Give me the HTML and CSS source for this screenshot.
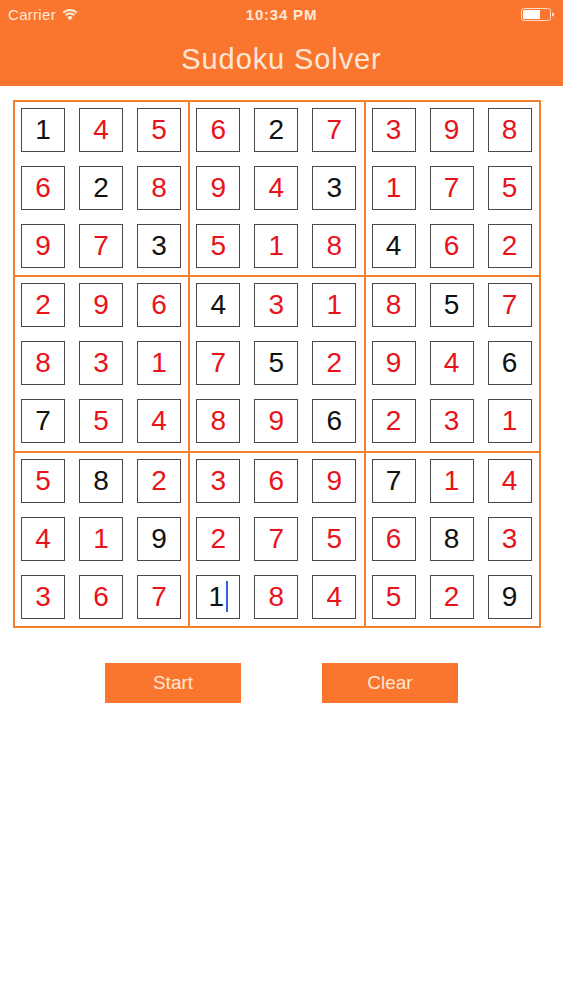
FILE: index.html
```html
<!DOCTYPE html>
<html>
<head>
<meta charset="utf-8">
<link rel="stylesheet" href="styles.css">
</head>
<body>
<header class="top">
  <div class="status">
    <div class="carrier">Carrier
      <svg class="wifi" width="16" height="13" viewBox="0 0 16 13"><path d="M8 12.2 L5.4 9.4 A3.7 3.7 0 0 1 10.6 9.4 Z" fill="#fde9da"/><path d="M3.6 7.3 A6.3 6.3 0 0 1 12.4 7.3" stroke="#fde9da" stroke-width="1.9" fill="none"/><path d="M1.2 4.8 A9.6 9.6 0 0 1 14.8 4.8" stroke="#fde9da" stroke-width="1.9" fill="none"/></svg>
    </div>
    <div class="time">10:34 PM</div>
    <svg class="battery" width="34" height="13" viewBox="0 0 34 13"><rect x="0.5" y="0.5" width="29" height="12" rx="2" fill="none" stroke="#fbd9c2" stroke-width="1"/><rect x="2" y="2" width="17" height="9" rx="1" fill="#fff"/><rect x="31" y="4.5" width="2" height="4" rx="1" fill="#fbd9c2"/></svg>
  </div>
  <h1 class="title">Sudoku Solver</h1>
</header>

<main class="board">
  <div class="block">
    <div class="cell">1</div><div class="cell r">4</div><div class="cell r">5</div>
    <div class="cell r">6</div><div class="cell">2</div><div class="cell r">8</div>
    <div class="cell r">9</div><div class="cell r">7</div><div class="cell">3</div>
  </div>
  <div class="block">
    <div class="cell r">6</div><div class="cell">2</div><div class="cell r">7</div>
    <div class="cell r">9</div><div class="cell r">4</div><div class="cell">3</div>
    <div class="cell r">5</div><div class="cell r">1</div><div class="cell r">8</div>
  </div>
  <div class="block">
    <div class="cell r">3</div><div class="cell r">9</div><div class="cell r">8</div>
    <div class="cell r">1</div><div class="cell r">7</div><div class="cell r">5</div>
    <div class="cell">4</div><div class="cell r">6</div><div class="cell r">2</div>
  </div>
  <div class="block">
    <div class="cell r">2</div><div class="cell r">9</div><div class="cell r">6</div>
    <div class="cell r">8</div><div class="cell r">3</div><div class="cell r">1</div>
    <div class="cell">7</div><div class="cell r">5</div><div class="cell r">4</div>
  </div>
  <div class="block">
    <div class="cell">4</div><div class="cell r">3</div><div class="cell r">1</div>
    <div class="cell r">7</div><div class="cell">5</div><div class="cell r">2</div>
    <div class="cell r">8</div><div class="cell r">9</div><div class="cell">6</div>
  </div>
  <div class="block">
    <div class="cell r">8</div><div class="cell">5</div><div class="cell r">7</div>
    <div class="cell r">9</div><div class="cell r">4</div><div class="cell">6</div>
    <div class="cell r">2</div><div class="cell r">3</div><div class="cell r">1</div>
  </div>
  <div class="block">
    <div class="cell r">5</div><div class="cell">8</div><div class="cell r">2</div>
    <div class="cell r">4</div><div class="cell r">1</div><div class="cell">9</div>
    <div class="cell r">3</div><div class="cell r">6</div><div class="cell r">7</div>
  </div>
  <div class="block">
    <div class="cell r">3</div><div class="cell r">6</div><div class="cell r">9</div>
    <div class="cell r">2</div><div class="cell r">7</div><div class="cell r">5</div>
    <div class="cell">1<span class="caret"></span></div><div class="cell r">8</div><div class="cell r">4</div>
  </div>
  <div class="block">
    <div class="cell">7</div><div class="cell r">1</div><div class="cell r">4</div>
    <div class="cell r">6</div><div class="cell">8</div><div class="cell r">3</div>
    <div class="cell r">5</div><div class="cell r">2</div><div class="cell">9</div>
  </div>
</main>

<div class="actions">
  <button class="btn">Start</button>
  <button class="btn">Clear</button>
</div>
</body>
</html>
```

FILE: styles.css
```css
html, body {
  margin: 0;
  padding: 0;
  background: #fff;
  font-family: "Liberation Sans", Arial, sans-serif;
}

.top {
  background: #fa762e;
  height: 86px;
  display: flex;
  flex-direction: column;
}

.status {
  height: 28px;
  display: flex;
  align-items: center;
  justify-content: space-between;
  padding: 0 8px 0 8px;
  color: #fde9da;
  font-size: 15px;
  position: relative;
}

.carrier {
  display: flex;
  align-items: center;
  gap: 6px;
  letter-spacing: 0.3px;
}

.time {
  position: absolute;
  left: 0;
  right: 0;
  text-align: center;
  font-weight: 600;
  font-size: 15px;
  letter-spacing: 0.8px;
}

.title {
  margin: 0;
  flex: 1;
  display: flex;
  align-items: center;
  justify-content: center;
  font-weight: normal;
  font-size: 29px;
  letter-spacing: 0.9px;
  color: #fde6d5;
  padding-top: 4px;
}

.board {
  margin: 14px 0 0 13px;
  width: 528px;
  box-sizing: border-box;
  border: 1px solid #f47f2a;
  display: grid;
  grid-template-columns: repeat(3, 1fr);
}

.block {
  border: 1px solid #f47f2a;
  aspect-ratio: 1 / 1;
  box-sizing: border-box;
  padding: 6px;
  display: grid;
  grid-template-columns: repeat(3, 44px);
  grid-template-rows: repeat(3, 44px);
  gap: 14px;
  align-content: start;
}

.cell {
  width: 44px;
  height: 44px;
  box-sizing: border-box;
  border: 1px solid #4a4a4a;
  display: flex;
  align-items: center;
  justify-content: center;
  font-size: 28px;
  color: #111;
  line-height: 1;
}

.cell.r {
  color: #e8131b;
}

.caret {
  display: inline-block;
  width: 2px;
  height: 31px;
  background: #3b5ee0;
  margin-left: 2px;
}

.actions {
  display: flex;
  margin-top: 35px;
  padding-left: 105px;
  gap: 81px;
}

.btn {
  width: 136px;
  height: 40px;
  border: none;
  background: #fa762e;
  color: #fde6d6;
  font-family: "Liberation Sans", Arial, sans-serif;
  font-size: 19px;
  padding: 0;
}
```
